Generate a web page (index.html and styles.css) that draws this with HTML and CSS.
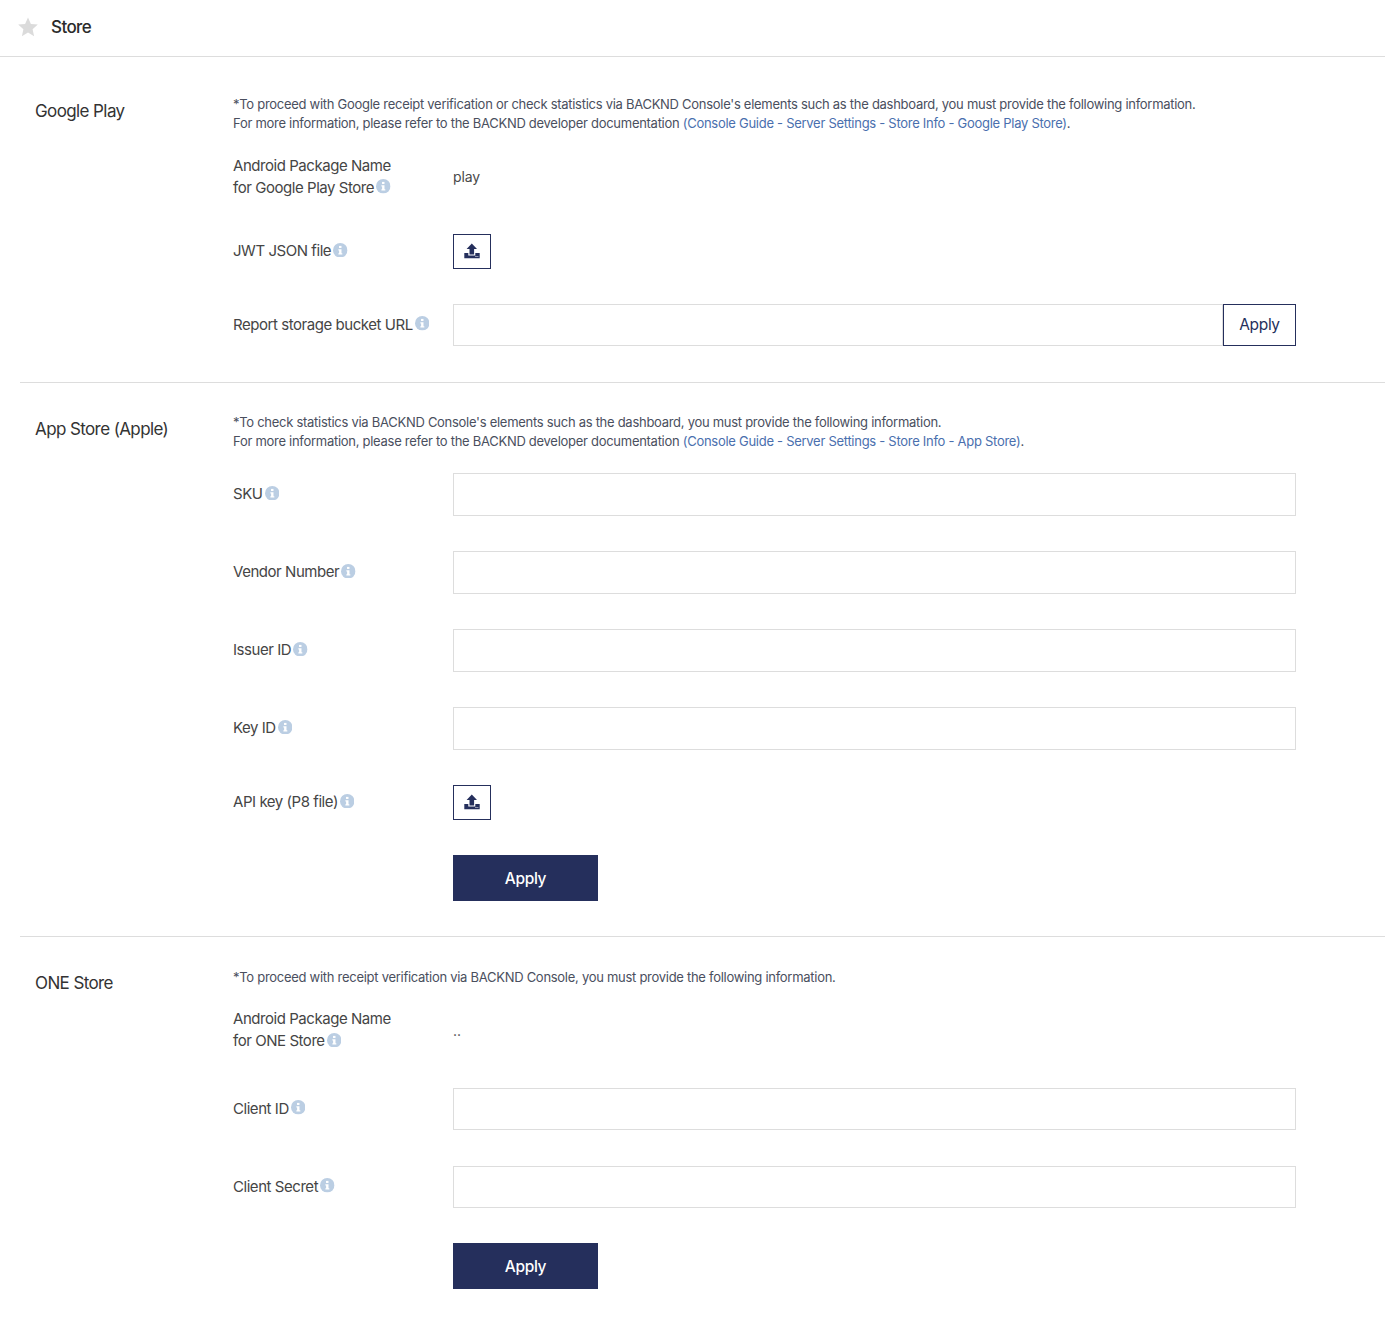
FILE: index.html
```html
<!DOCTYPE html>
<html>
    <head lang="en">
        <meta name="viewport" content="width=device-width, initial-scale=1" />
        <title>Store</title>
        <link rel="stylesheet" href="styles.css">
    </head>
    <body>
        <svg class="icon-defs" width="0" height="0">
            <symbol id="info" viewBox="0 0 14 14">
                <circle cx="7" cy="7" r="7" fill="#bbcee3"/>
                <rect x="5.8" y="2.8" width="2.4" height="2" fill="#fff"/>
                <path d="M5.2 6 H8.2 V10 H9 V11.2 H5.2 V10 H5.9 V7.2 H5.2 Z" fill="#fff"/>
            </symbol>
            <symbol id="upload" viewBox="0 0 16 16">
                <path d="M7.8 0.5 L13 6 H10.1 V11.5 H5.5 V6 H2.6 Z" fill="#252f5c"/>
                <path d="M0.3 10 H4.3 V12.5 H11.3 V10 H15.7 V15.2 H0.3 Z" fill="#252f5c"/>
                <rect x="11" y="13" width="3.5" height="1" fill="#8e94ad"/>
            </symbol>
        </svg>

        <header class="page-title">
            <svg class="star" viewBox="0 0 20 20" width="20" height="20">
                <path d="M10 0.5 L12.9 6.9 L19.8 7.6 L14.6 12.3 L16.1 19.2 L10 15.6 L3.9 19.2 L5.4 12.3 L0.2 7.6 L7.1 6.9 Z" fill="#dbdbdb"/>
            </svg>
            <span>Store</span>
        </header>

        <!-- GOOGLE PLAY -->
        <section class="store first">
            <h2 class="store-name">Google Play</h2>
            <div class="store-body">
                <p class="note">*To proceed with Google receipt verification or check statistics via BACKND Console's elements such as the dashboard, you must provide the following information.<br>For more information, please refer to the BACKND developer documentation <a href="#">(Console Guide - Server Settings - Store Info - Google Play Store)</a>.</p>
                <div class="row">
                    <div class="label">Android Package Name<br>for Google Play Store<svg class="info"><use href="#info"/></svg></div>
                    <div class="value">play</div>
                </div>
                <div class="row">
                    <div class="label">JWT JSON file<svg class="info"><use href="#info"/></svg></div>
                    <button class="upload-button"><svg width="16" height="16"><use href="#upload"/></svg></button>
                </div>
                <div class="row">
                    <div class="label">Report storage bucket URL<svg class="info"><use href="#info"/></svg></div>
                    <input class="text-input" type="text">
                    <button class="apply-outline">Apply</button>
                </div>
            </div>
        </section>

        <!-- APP STORE -->
        <section class="store">
            <h2 class="store-name">App Store (Apple)</h2>
            <div class="store-body">
                <p class="note">*To check statistics via BACKND Console's elements such as the dashboard, you must provide the following information.<br>For more information, please refer to the BACKND developer documentation <a href="#">(Console Guide - Server Settings - Store Info - App Store)</a>.</p>
                <div class="row">
                    <div class="label">SKU<svg class="info"><use href="#info"/></svg></div>
                    <input class="text-input" type="text">
                </div>
                <div class="row">
                    <div class="label">Vendor Number<svg class="info"><use href="#info"/></svg></div>
                    <input class="text-input" type="text">
                </div>
                <div class="row">
                    <div class="label">Issuer ID<svg class="info"><use href="#info"/></svg></div>
                    <input class="text-input" type="text">
                </div>
                <div class="row">
                    <div class="label">Key ID<svg class="info"><use href="#info"/></svg></div>
                    <input class="text-input" type="text">
                </div>
                <div class="row">
                    <div class="label">API key (P8 file)<svg class="info"><use href="#info"/></svg></div>
                    <button class="upload-button"><svg width="16" height="16"><use href="#upload"/></svg></button>
                </div>
                <div class="row">
                    <div class="label"></div>
                    <button class="apply-solid">Apply</button>
                </div>
            </div>
        </section>

        <!-- ONE STORE -->
        <section class="store last">
            <h2 class="store-name">ONE Store</h2>
            <div class="store-body">
                <p class="note">*To proceed with receipt verification via BACKND Console, you must provide the following information.</p>
                <div class="row">
                    <div class="label">Android Package Name<br>for ONE Store<svg class="info"><use href="#info"/></svg></div>
                    <div class="value">..</div>
                </div>
                <div class="row">
                    <div class="label">Client ID<svg class="info"><use href="#info"/></svg></div>
                    <input class="text-input" type="text">
                </div>
                <div class="row">
                    <div class="label">Client Secret<svg class="info"><use href="#info"/></svg></div>
                    <input class="text-input" type="text">
                </div>
                <div class="row">
                    <div class="label"></div>
                    <button class="apply-solid">Apply</button>
                </div>
            </div>
        </section>
    </body>
</html>
```

FILE: styles.css
```css
body {
    margin: 0;
    font-family: Inter, "Liberation Sans", sans-serif;
    color: #333;
    background-color: #fff;
}

.icon-defs {
    position: absolute;
}

.page-title {
    display: flex;
    align-items: center;
    box-sizing: content-box;
    height: 53px;
    padding: 0 0 3px 18px;
    border-bottom: 1px solid #ddd;
    font-size: 17px;
    letter-spacing: -0.6px;
    font-weight: 500;
    color: #2b2b2b;
}
.star {
    margin-right: 13px;
}

.store {
    display: flex;
    margin-left: 20px;
    padding: 30px 89px 35px 15px;
    border-bottom: 1px solid #ddd;
}
.store.first {
    padding-top: 37.5px;
    padding-bottom: 36.15px;
}
.store.last {
    border-bottom: none;
    padding-top: 30.85px;
    padding-bottom: 30px;
}

.store-name {
    width: 198px;
    flex-shrink: 0;
    margin: 4.5px 0 0;
    font-size: 17px;
    letter-spacing: -0.6px;
    line-height: 24px;
    font-weight: 400;
    color: #333;
}
.first .store-name {
    margin-top: 4px;
}
.last .store-name {
    margin-top: 3.3px;
}

.store-body {
    flex: 1;
    display: flex;
    flex-direction: column;
    gap: 35.15px;
}
.last .store-body {
    gap: 35.45px;
}

.note {
    margin: 0 0 -13.15px;
    font-size: 13px;
    letter-spacing: -0.28px;
    line-height: 19px;
    color: #4a4f5e;
}
.note a {
    color: #4a6fae;
    text-decoration: none;
}
.last .note {
    margin-bottom: -13.95px;
}

.row {
    display: flex;
    align-items: center;
}

.label {
    width: 220px;
    flex-shrink: 0;
    font-size: 15px;
    letter-spacing: -0.45px;
    line-height: 22px;
    color: #454545;
}

.value {
    font-size: 14px;
    letter-spacing: -0.1px;
    color: #4a4a4a;
}

.info {
    width: 14.5px;
    height: 14.5px;
    margin-left: 2px;
    vertical-align: -1px;
}

.text-input {
    flex: 1;
    min-width: 0;
    height: 42.85px;
    box-sizing: border-box;
    border: 1px solid #ddd;
    padding: 0 12px;
    background-color: #fff;
}
.first .text-input {
    height: 42px;
}
.last .text-input {
    height: 42.3px;
}

.upload-button {
    display: flex;
    justify-content: center;
    align-items: center;
    width: 38px;
    height: 35px;
    padding: 0;
    border: 1px solid #252f5c;
    background-color: #fff;
}

.apply-outline {
    width: 73px;
    height: 42px;
    border: 1px solid #252f5c;
    background-color: #fff;
    font-family: inherit;
    font-size: 15.5px;
    letter-spacing: -0.35px;
    color: #252f5c;
}

.apply-solid {
    width: 145px;
    height: 46px;
    border: none;
    background-color: #252f5c;
    font-family: inherit;
    font-size: 15.5px;
    letter-spacing: -0.35px;
    font-weight: 500;
    color: #fff;
}
```
